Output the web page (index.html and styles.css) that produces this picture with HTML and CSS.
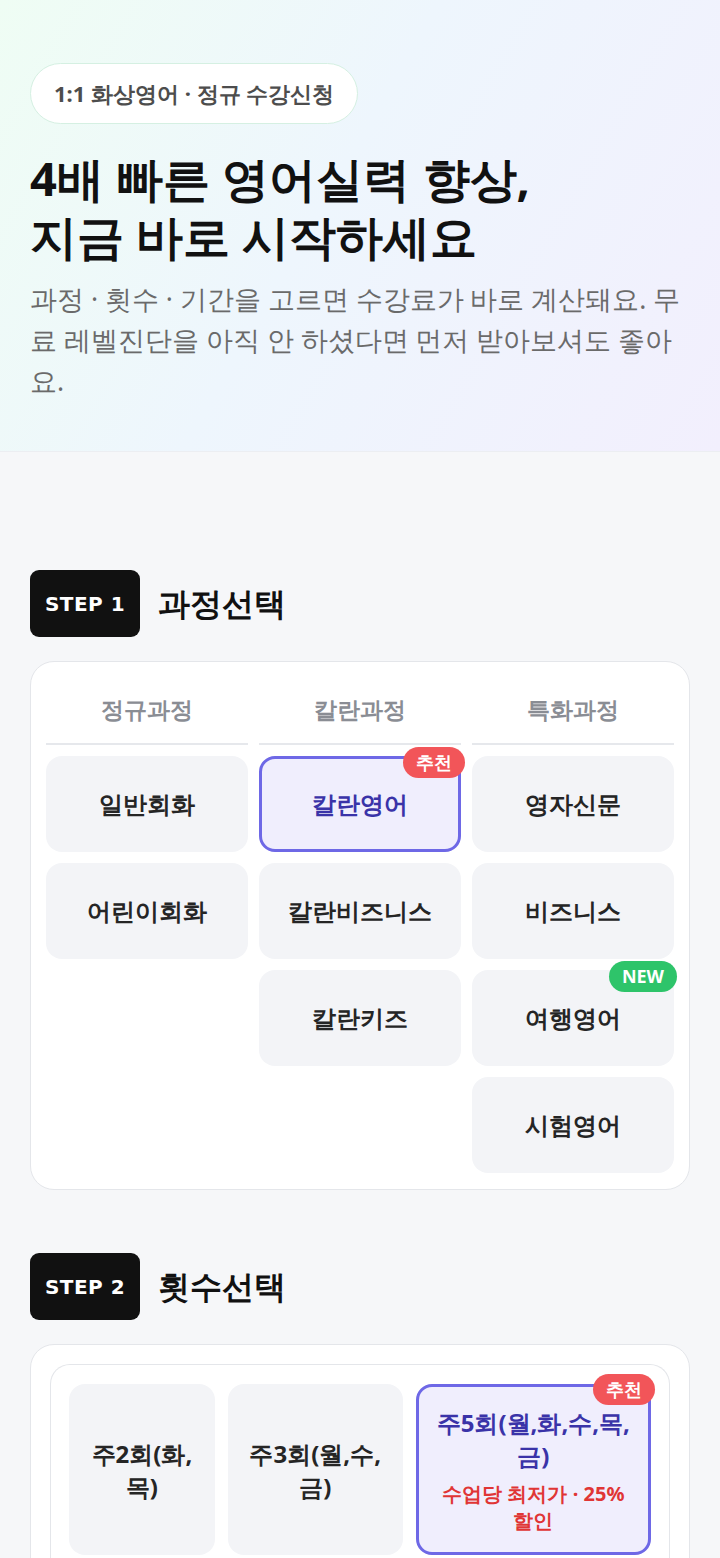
FILE: index.html
```html
<!DOCTYPE html>
<html lang="ko">
<head>
<meta charset="utf-8">
<title>수강신청</title>
<link rel="stylesheet" href="styles.css">
</head>
<body>
<header class="hero">
  <div class="pill">1:1 화상영어 · 정규 수강신청</div>
  <h1 class="title">4배 빠른 영어실력 향상,<br>지금 바로 시작하세요</h1>
  <p class="lead">과정 · 횟수 · 기간을 고르면 수강료가 바로 계산돼요. 무료 레벨진단을 아직 안 하셨다면 먼저 받아보셔도 좋아요.</p>
</header>
<main class="main">
  <section class="step">
    <div class="step-head">
      <span class="step-badge">STEP 1</span>
      <h2 class="step-title">과정선택</h2>
    </div>
    <div class="card">
      <div class="course-grid">
        <div class="col">
          <div class="col-head">정규과정</div>
          <button class="opt">일반회화</button>
          <button class="opt">어린이회화</button>
        </div>
        <div class="col">
          <div class="col-head">칼란과정</div>
          <button class="opt selected">칼란영어<span class="tag tag-red">추천</span></button>
          <button class="opt">칼란비즈니스</button>
          <button class="opt">칼란키즈</button>
        </div>
        <div class="col">
          <div class="col-head">특화과정</div>
          <button class="opt">영자신문</button>
          <button class="opt">비즈니스</button>
          <button class="opt">여행영어<span class="tag tag-green">NEW</span></button>
          <button class="opt">시험영어</button>
        </div>
      </div>
    </div>
  </section>
  <section class="step">
    <div class="step-head">
      <span class="step-badge">STEP 2</span>
      <h2 class="step-title">횟수선택</h2>
    </div>
    <div class="card card2">
      <div class="inner">
        <button class="freq">주2회(화,<br>목)</button>
        <button class="freq">주3회(월,수,<br>금)</button>
        <button class="freq selected">주5회(월,화,수,목,<br>금)<span class="note">수업당 최저가 · 25%<br>할인</span><span class="tag tag-red">추천</span></button>
      </div>
    </div>
  </section>
</main>
</body>
</html>
```

FILE: styles.css
```css
* { box-sizing: border-box; }
html, body { margin: 0; padding: 0; }
body {
  background: #f6f7f9;
  font-family: "Noto Sans", sans-serif;
  color: #111;
  width: 720px;
  overflow: hidden;
}
.hero {
  background: linear-gradient(120deg, #effdf4 0%, #eef6fd 45%, #f2effd 100%);
  padding: 63px 30px 0;
  border-bottom: 1px solid #eceef2;
  height: 452px;
}
.pill {
  display: inline-flex;
  align-items: center;
  height: 61px;
  padding: 0 23px;
  border-radius: 31px;
  background: #fff;
  border: 1.5px solid #d5f0e2;
  font-weight: 700;
  font-size: 22px;
  color: #4d4d4d;
}
.title {
  margin: 25px 0 0;
  font-size: 47px;
  line-height: 58px;
  font-weight: 700;
  color: #111;
}
.lead {
  margin: 14px 0 0;
  font-size: 26.5px;
  line-height: 41px;
  color: #6a6a6a;
  width: 660px;
}
.main { padding: 118px 30px 0; }
.step { margin-bottom: 63px; }
.step-head {
  display: flex;
  align-items: center;
  gap: 18px;
  margin-bottom: 24px;
}
.step-badge {
  display: flex;
  align-items: center;
  justify-content: center;
  width: 110px;
  height: 67px;
  background: #111;
  color: #fff;
  border-radius: 9px;
  font-family: "DejaVu Sans", sans-serif;
  font-weight: 700;
  font-size: 20px;
  letter-spacing: 0.5px;
}
.step-title {
  margin: 0;
  font-size: 32px;
  font-weight: 700;
}
.card {
  background: #fff;
  border: 1.5px solid #e4e6ea;
  border-radius: 24px;
  padding: 15px 15px 16px;
}
.course-grid {
  display: grid;
  grid-template-columns: 1fr 1fr 1fr;
  gap: 11px;
}
.col { display: flex; flex-direction: column; gap: 11px; }
.col-head {
  height: 68px;
  display: flex;
  align-items: center;
  justify-content: center;
  font-size: 23px;
  font-weight: 600;
  color: #8a8d94;
  border-bottom: 2px solid #e6e8ec;
  padding-bottom: 2px;
}
.opt {
  position: relative;
  height: 96px;
  border: none;
  border-radius: 16px;
  background: #f3f4f7;
  font-family: inherit;
  font-size: 24px;
  font-weight: 700;
  color: #252525;
  cursor: pointer;
}
.opt.selected, .freq.selected {
  background: #f0eefd;
  border: 3px solid #6e68e6;
  color: #3a33a8;
}
.tag {
  position: absolute;
  top: -10px;
  right: -5px;
  height: 31px;
  padding: 0 13px;
  border-radius: 16px;
  color: #fff;
  font-size: 18px;
  font-weight: 700;
  line-height: 31px;
}
.tag-red { background: #f25559; }
.tag-green { background: #2ec46a; right: -3px; top: -9px; padding: 0 13px; }
.opt.selected .tag { top: -12px; right: -7px; }
.card2 { padding: 19px 19px 0; border-bottom-left-radius: 0; border-bottom-right-radius: 0; }
.inner {
  border: 1.5px solid #e4e6ea;
  border-bottom: none;
  border-radius: 20px 20px 0 0;
  padding: 19px 18px 0;
  display: grid;
  grid-template-columns: 145fr 174fr 234fr;
  gap: 13px;
  height: 300px;
}
.freq {
  position: relative;
  height: 171px;
  border: none;
  border-radius: 16px;
  background: #f3f4f7;
  font-family: inherit;
  font-size: 24px;
  font-weight: 700;
  line-height: 33px;
  color: #252525;
  display: flex;
  flex-direction: column;
  align-items: center;
  justify-content: center;
  text-align: center;
  padding: 0 4px;
}
.note {
  margin-top: 8px;
  font-size: 20px;
  line-height: 27px;
  color: #e03535;
}
.freq .tag { top: -13px; right: -7px; }
```
